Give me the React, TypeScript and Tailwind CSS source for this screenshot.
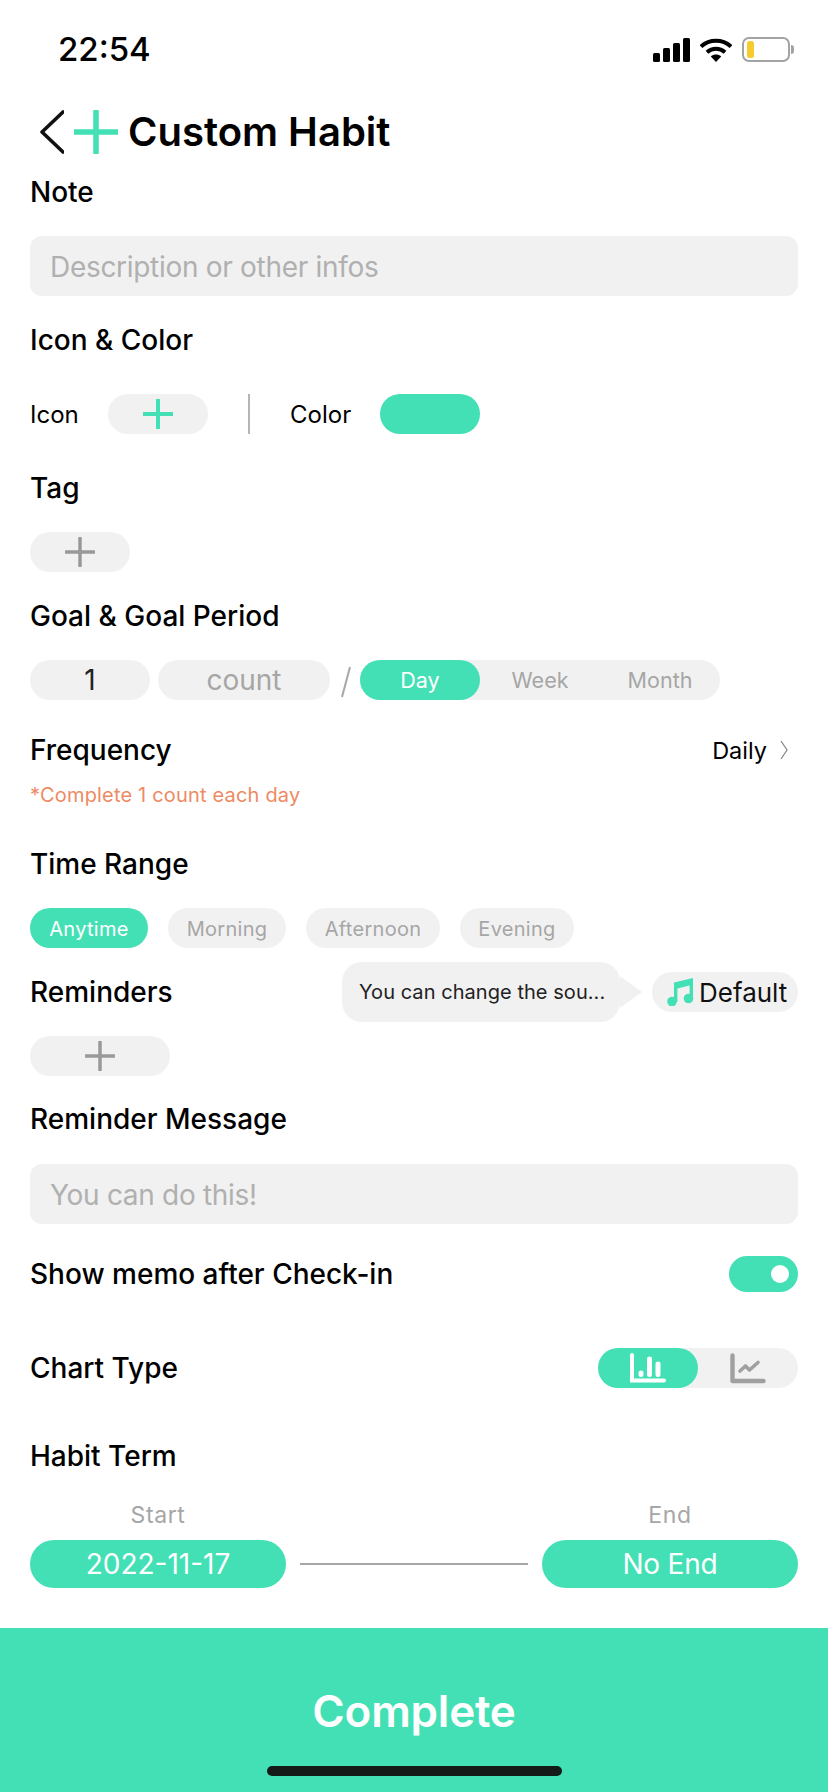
function Plus({ className, size = 44, stroke = 4 }: { className?: string; size?: number; stroke?: number }) {
  const c = size / 2;
  return (
    <svg width={size} height={size} viewBox={`0 0 ${size} ${size}`} className={className}>
      <path
        d={`M${c} 1V${size - 1}M1 ${c}H${size - 1}`}
        stroke="currentColor"
        strokeWidth={stroke}
        strokeLinecap="round"
        fill="none"
      />
    </svg>
  );
}

function SectionTitle({ children, className = "" }: { children: React.ReactNode; className?: string }) {
  return <div className={`flex h-10 items-center text-[28px] font-medium text-black ${className}`}>{children}</div>;
}

function TextBox({ placeholder, className = "" }: { placeholder: string; className?: string }) {
  return (
    <div className={`flex h-[60px] items-center rounded-xl bg-[#f1f1f1] px-5 pt-[2px] text-[28px] tracking-[-0.3px] text-[#b0b0b0] ${className}`}>
      {placeholder}
    </div>
  );
}

function Chip({ label, active, width }: { label: string; active?: boolean; width: string }) {
  return (
    <div
      className={`flex h-10 items-center justify-center rounded-full pt-[1px] text-[20px] tracking-[0.3px] ${width} ${
        active ? "bg-[#43e0b6] text-white" : "bg-[#f1f1f1] text-[#a6a6a6]"
      }`}
    >
      {label}
    </div>
  );
}

function StatusIcons() {
  return (
    <div className="flex items-center">
      <svg width="37" height="24" viewBox="0 0 37 24" fill="#000">
        <rect x="0" y="15" width="7" height="9" rx="1.5" />
        <rect x="10" y="10" width="7" height="14" rx="1.5" />
        <rect x="20" y="5" width="7" height="19" rx="1.5" />
        <rect x="30" y="0" width="7" height="24" rx="1.5" />
      </svg>
      <svg width="32" height="24" viewBox="0 0 32 24" className="ml-[10px]" fill="none" stroke="#000" strokeWidth="4">
        <path d="M1 8.5C9.5 0.8 22.5 0.8 31 8.5" />
        <path d="M7 14.2C12.2 9.5 19.8 9.5 25 14.2" />
        <path d="M16 24l-5.2-5.6c3-2.4 7.4-2.4 10.4 0z" fill="#000" stroke="none" />
      </svg>
      <div className="ml-[10px] flex items-center">
        <div className="flex h-[25px] w-[48px] items-center rounded-[7px] border-2 border-[#a3a3a3] pl-[3px]">
          <div className="h-[17px] w-[7px] rounded-[2.5px] bg-[#f7cb2f]" />
        </div>
        <div className="ml-[1px] h-[9px] w-[3px] rounded-r-full bg-[#a3a3a3]" />
      </div>
    </div>
  );
}

export default function App() {
  return (
    <div className="flex h-[1792px] w-[828px] flex-col overflow-hidden bg-white font-['Inter','Liberation_Sans',sans-serif] text-black">
      <div className="flex h-[100px] items-start justify-between pl-[58px] pr-[34px] pt-[28px]">
        <span className="text-[33px] leading-[42px] font-medium">22:54</span>
        <div className="pt-[9px]">
          <StatusIcons />
        </div>
      </div>

      <div className="flex h-16 items-center pl-10">
        <svg width="24" height="44" viewBox="0 0 24 44" fill="none" stroke="#111" strokeWidth="3.6" strokeLinecap="round" strokeLinejoin="round">
          <path d="M23 2L2 22L23 42" />
        </svg>
        <Plus className="ml-[10px] text-[#43e0b6]" size={44} stroke={5.5} />
        <span className="ml-[10px] text-[40px] font-semibold">Custom Habit</span>
      </div>

      <div className="flex flex-col px-[30px] pt-2">
        <SectionTitle>Note</SectionTitle>
        <TextBox placeholder="Description or other infos" className="mt-6" />

        <SectionTitle className="mt-6">Icon &amp; Color</SectionTitle>
        <div className="mt-[34px] flex h-10 items-center">
          <span className="w-[78px] pt-[2px] text-2xl">Icon</span>
          <div className="flex h-10 w-[100px] items-center justify-center rounded-full bg-[#f1f1f1] text-[#43e0b6]">
            <Plus size={30} stroke={4} />
          </div>
          <div className="ml-10 h-10 w-[2px] bg-[#b5b5b5]" />
          <span className="ml-10 w-[90px] pt-[2px] text-2xl">Color</span>
          <div className="h-10 w-[100px] rounded-full bg-[#43e0b6]" />
        </div>

        <SectionTitle className="mt-[34px]">Tag</SectionTitle>
        <div className="mt-6 flex h-10 w-[100px] items-center justify-center rounded-full bg-[#f1f1f1] text-[#999999]">
          <Plus size={30} stroke={3.5} />
        </div>

        <SectionTitle className="mt-6">Goal &amp; Goal Period</SectionTitle>
        <div className="mt-6 flex h-10 items-center">
          <div className="flex h-10 w-[120px] items-center justify-center rounded-full bg-[#f1f1f1] text-[28px] text-[#222]">1</div>
          <div className="ml-2 flex h-10 w-[172px] items-center justify-center rounded-full bg-[#f1f1f1] text-[28px] text-[#a6a6a6]">count</div>
          <svg width="12" height="32" viewBox="0 0 12 32" className="ml-[10px] mt-1" fill="none" stroke="#a6a6a6" strokeWidth="2">
            <path d="M10 1L2 31" />
          </svg>
          <div className="ml-2 flex h-10 w-[360px] items-center rounded-full bg-[#f1f1f1] text-[21.5px] text-[#a6a6a6]">
            <div className="flex h-10 w-[120px] items-center justify-center rounded-full bg-[#43e0b6] text-white">Day</div>
            <div className="flex w-[120px] justify-center">Week</div>
            <div className="flex w-[120px] justify-center">Month</div>
          </div>
        </div>

        <div className="mt-[30px] flex h-10 items-center justify-between">
          <span className="text-[28px] font-medium">Frequency</span>
          <div className="flex items-center pr-[10px]">
            <span className="pt-[2px] text-[23.5px]">Daily</span>
            <svg width="8" height="20" viewBox="0 0 8 20" className="ml-[13px]" fill="none" stroke="#8a8a8a" strokeWidth="1.3">
              <path d="M1 1l6 9-6 9" />
            </svg>
          </div>
        </div>
        <div className="mt-[13px] flex h-6 items-center text-[20px] tracking-[0.18px] text-[#ee8a63]">*Complete 1 count each day</div>

        <SectionTitle className="mt-[37px]">Time Range</SectionTitle>
        <div className="mt-6 flex gap-5">
          <Chip label="Anytime" active width="w-[118px]" />
          <Chip label="Morning" width="w-[118px]" />
          <Chip label="Afternoon" width="w-[134px]" />
          <Chip label="Evening" width="w-[114px]" />
        </div>

        <div className="mt-[14px] flex h-[60px] items-center justify-between">
          <span className="text-[28px] font-medium">Reminders</span>
          <div className="flex items-center">
            <div className="relative flex h-[60px] w-[278px] items-center rounded-[20px] bg-[#f1f1f1] pl-[17px] text-xl tracking-[0.05px] text-[#222]">
              You can change the sou...
              <div className="absolute left-full top-[14px] h-0 w-0 border-y-[16px] border-l-[22px] border-y-transparent border-l-[#f1f1f1]" />
            </div>
            <div className="ml-8 flex h-10 w-[146px] items-center rounded-full bg-[#f1f1f1] pl-[15px]">
              <svg width="27" height="28" viewBox="0 0 27 28" fill="#43e0b6">
                <path d="M7 4.5L26 0v21h-3.4V7.5L10.4 10.4V24H7z" />
                <circle cx="5" cy="23.5" r="4.8" />
                <circle cx="21.5" cy="20.5" r="4.8" />
              </svg>
              <span className="ml-[5px] text-[26px] text-[#111]">Default</span>
            </div>
          </div>
        </div>
        <div className="mt-[14px] flex h-10 w-[140px] items-center justify-center rounded-full bg-[#f1f1f1] text-[#999999]">
          <Plus size={30} stroke={3.5} />
        </div>

        <SectionTitle className="mt-[23px]">Reminder Message</SectionTitle>
        <TextBox placeholder="You can do this!" className="mt-[25px]" />

        <div className="mt-[30px] flex h-10 items-center justify-between">
          <span className="text-[28px] font-medium">Show memo after Check-in</span>
          <div className="flex h-9 w-[69px] items-center justify-end rounded-full bg-[#43e0b6] pr-[9px]">
            <div className="h-[18px] w-[18px] rounded-full bg-white" />
          </div>
        </div>

        <div className="mt-[54px] flex h-10 items-center justify-between">
          <span className="text-[28px] font-medium">Chart Type</span>
          <div className="flex h-10 w-[200px] items-center rounded-full bg-[#f1f1f1]">
            <div className="flex h-10 w-[100px] items-center justify-center rounded-full bg-[#43e0b6]">
              <svg width="36" height="30" viewBox="0 0 36 30" fill="none" stroke="#fff" strokeWidth="4" strokeLinecap="round">
                <path d="M2 2V27.5H34" />
                <path strokeWidth="5" d="M11 21.5V20M19.5 21.5V6M28 21.5V11" />
              </svg>
            </div>
            <div className="flex w-[100px] justify-center">
              <svg width="36" height="31" viewBox="0 0 36 31" fill="none" stroke="#a0a0a0" strokeWidth="4.4" strokeLinecap="round" strokeLinejoin="round">
                <path d="M2.5 2.5V28H33.5" />
                <path strokeWidth="3.6" d="M10 18L15.5 13L19.5 17L28 9.5" />
              </svg>
            </div>
          </div>
        </div>

        <SectionTitle className="mt-12">Habit Term</SectionTitle>
        <div className="mt-[27px] flex justify-between text-[23px] leading-6 tracking-[0.6px] text-[#a6a6a6]">
          <span className="w-64 text-center">Start</span>
          <span className="w-64 text-center">End</span>
        </div>
        <div className="mt-[13px] flex h-12 items-center justify-between">
          <div className="flex h-12 w-64 items-center justify-center rounded-full bg-[#43e0b6] text-[28px] text-white">2022-11-17</div>
          <div className="h-[2px] w-[228px] bg-[#a6a6a6]" />
          <div className="flex h-12 w-64 items-center justify-center rounded-full bg-[#43e0b6] text-[28px] tracking-[-0.2px] text-white">No End</div>
        </div>
      </div>

      <div className="mt-10 flex flex-1 flex-col items-center bg-[#43e0b6]">
        <span className="mt-[55px] text-[44px] leading-[56px] font-semibold tracking-[-0.2px] text-white">Complete</span>
        <div className="mt-[27px] h-[10px] w-[295px] rounded-full bg-[#141a18]" />
      </div>
    </div>
  );
}
